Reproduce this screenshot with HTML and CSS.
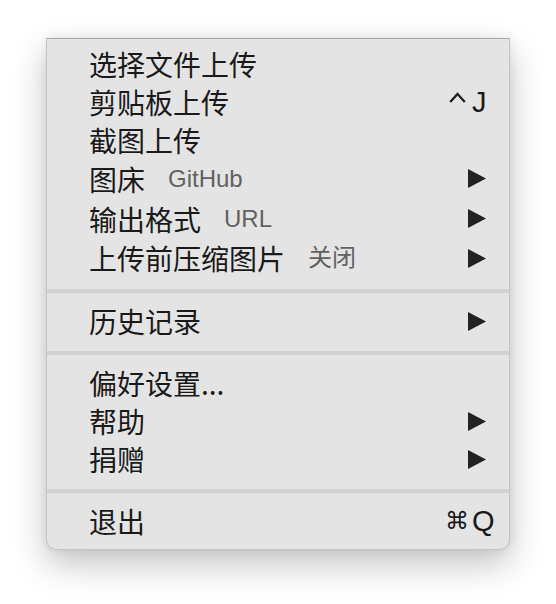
FILE: index.html
```html
<!DOCTYPE html>
<html lang="zh-CN">
<head>
<meta charset="utf-8">
<title>Menu</title>
<link rel="stylesheet" href="styles.css">
</head>
<body>
<div class="stage">
  <div class="menu">
    <div class="row"><span class="label">选择文件上传</span></div>
    <div class="row"><span class="label">剪贴板上传</span>
      <span class="shortcut">
        <span class="mod"><svg class="ctrl" viewBox="0 0 17 11" width="17" height="11"><polyline points="1.2,10 8.5,2 15.8,10" fill="none" stroke="#222" stroke-width="2.4" stroke-linejoin="miter"/></svg></span>
        <span class="key">J</span>
      </span>
    </div>
    <div class="row"><span class="label">截图上传</span></div>
    <div class="row tall"><span class="label">图床</span><span class="value">GitHub</span><svg class="arrow" viewBox="0 0 18 19" width="18" height="19"><polygon points="0,0 18,9.5 0,19" fill="#222"/></svg></div>
    <div class="row tall"><span class="label">输出格式</span><span class="value">URL</span><svg class="arrow" viewBox="0 0 18 19" width="18" height="19"><polygon points="0,0 18,9.5 0,19" fill="#222"/></svg></div>
    <div class="row tall"><span class="label">上传前压缩图片</span><span class="value">关闭</span><svg class="arrow" viewBox="0 0 18 19" width="18" height="19"><polygon points="0,0 18,9.5 0,19" fill="#222"/></svg></div>
    <div class="sep"></div>
    <div class="row"><span class="label">历史记录</span><svg class="arrow" viewBox="0 0 18 19" width="18" height="19"><polygon points="0,0 18,9.5 0,19" fill="#222"/></svg></div>
    <div class="sep"></div>
    <div class="row"><span class="label">偏好设置...</span></div>
    <div class="row"><span class="label">帮助</span><svg class="arrow" viewBox="0 0 18 19" width="18" height="19"><polygon points="0,0 18,9.5 0,19" fill="#222"/></svg></div>
    <div class="row"><span class="label">捐赠</span><svg class="arrow" viewBox="0 0 18 19" width="18" height="19"><polygon points="0,0 18,9.5 0,19" fill="#222"/></svg></div>
    <div class="sep"></div>
    <div class="row"><span class="label">退出</span>
      <span class="shortcut">
        <span class="mod cmd">⌘</span>
        <span class="key">Q</span>
      </span>
    </div>
  </div>
</div>
</body>
</html>
```

FILE: styles.css
```css
html, body {
  margin: 0;
  padding: 0;
  background: #ffffff;
}

.stage {
  box-sizing: border-box;
  min-height: 604px;
  padding: 38px 0 54px 46px;
  display: flex;
  align-items: flex-start;
}

.menu {
  box-sizing: border-box;
  width: 464px;
  height: 512px;
  background: #e4e4e4;
  border: 1px solid #c4c4c4;
  border-top-color: #a9a9a9;
  border-radius: 0 0 10px 10px;
  box-shadow: 0 14px 34px rgba(0, 0, 0, 0.24), 0 0 10px rgba(0, 0, 0, 0.08);
  padding: 6px 0 9px 0;
  display: flex;
  flex-direction: column;
  font-family: "Liberation Sans", "Noto Sans CJK SC", sans-serif;
  color: #1a1a1a;
}

.row {
  height: 38px;
  display: flex;
  align-items: center;
  padding: 0 23px 0 42px;
}

.row.tall {
  height: 40px;
}

.label {
  font-family: "Noto Sans CJK SC", sans-serif;
  font-size: 28px;
  font-weight: 400;
  line-height: 38px;
  white-space: nowrap;
}

.value {
  margin-left: 23px;
  font-size: 24px;
  line-height: 38px;
  color: #626262;
  white-space: nowrap;
}

.arrow {
  margin-left: auto;
  display: block;
}

.sep {
  height: 4px;
  background: #d1d1d1;
  margin: 11px 0 9px 0;
}

.shortcut {
  margin-left: auto;
  display: flex;
  align-items: center;
  font-size: 29px;
  line-height: 38px;
}

.mod {
  display: flex;
  align-items: center;
  justify-content: flex-end;
  margin-right: 6px;
}

.ctrl {
  display: block;
  margin-top: -9px;
}

.cmd {
  font-family: "DejaVu Sans", sans-serif;
  font-size: 24px;
  margin-right: 3px;
}

.key {
  width: 14px;
  white-space: nowrap;
  overflow: visible;
}
```
